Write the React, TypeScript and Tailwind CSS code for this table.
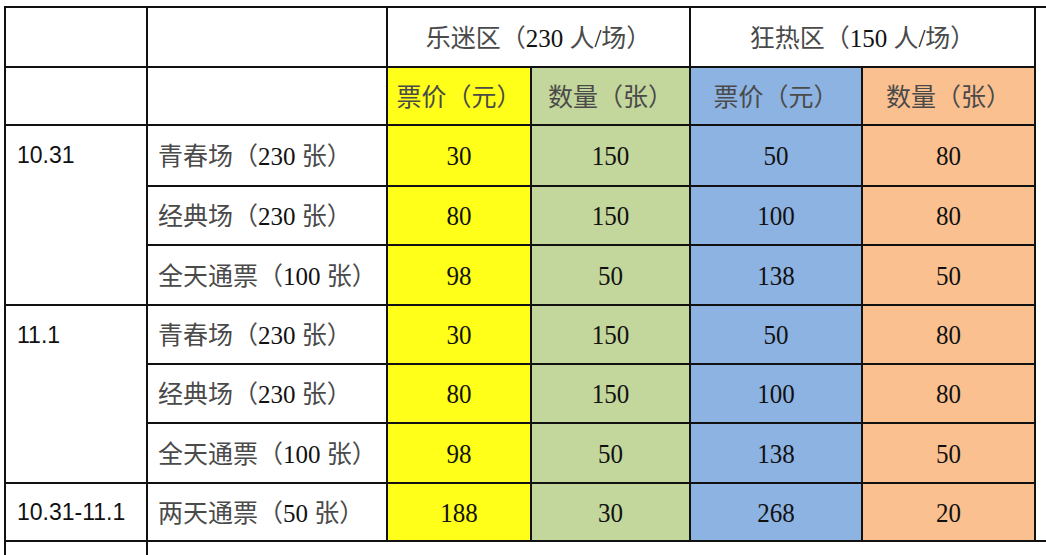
import React from "react";

const serif = "font-['Liberation_Serif','Noto_Sans_CJK_SC',serif]";

function Mixed({ text }: { text: string }) {
  const parts = text.split(/([\x00-\x7F]+)/).filter((p) => p.length > 0);
  return (
    <span className="whitespace-pre">
      {parts.map((p, i) =>
        /^[\x00-\x7F]+$/.test(p) ? (
          <span key={i} className="text-[#111] font-['Liberation_Serif',serif]">
            {p}
          </span>
        ) : (
          <span key={i} className="text-[#4a4a4a] font-['Noto_Sans_CJK_SC',sans-serif]">
            {p}
          </span>
        )
      )}
    </span>
  );
}

const cell = "border-r-2 border-b-2 border-[#111] flex items-center";

const colors = ["bg-[#ffff19]", "bg-[#c3d69b]", "bg-[#8db3e2]", "bg-[#fac08f]"];

type Row = { name: string; vals: string[] };

const group1: Row[] = [
  { name: "青春场（230 张）", vals: ["30", "150", "50", "80"] },
  { name: "经典场（230 张）", vals: ["80", "150", "100", "80"] },
  { name: "全天通票（100 张）", vals: ["98", "50", "138", "50"] },
];

function Num({ v }: { v: string }) {
  return <span className="inline-block scale-y-[1.08] text-[#111] font-['Liberation_Serif',serif]">{v}</span>;
}

function DataRow({ r }: { r: Row }) {
  return (
    <>
      <div className={`${cell} pl-[10px]`}>
        <Mixed text={r.name} />
      </div>
      {r.vals.map((v, i) => (
        <div key={i} className={`${cell} ${colors[i]} justify-center`}>
          <Num v={v} />
        </div>
      ))}
      <div />
    </>
  );
}

function DateCell({ label, first }: { label: string; first: number }) {
  return (
    <div className="row-span-3 border-r-2 border-b-2 border-[#111] flex flex-col">
      <div
        className="flex items-center pl-[11px] font-['Liberation_Sans',sans-serif] text-[23px] text-[#111]"
        style={{ height: first }}
      >
        {label}
      </div>
    </div>
  );
}

export default function App() {
  return (
    <div className="w-[1046px] h-[555px] overflow-hidden bg-white pt-[6px] pl-[4px]">
      <div
        className={`grid w-[1092px] border-l-2 border-t-2 border-[#111] text-[25px] leading-none ${serif} grid-cols-[142px_240px_144px_159px_172px_173px_60px] grid-rows-[60px_58px_61px_59px_60px_59px_59px_60px_58px_40px]`}
      >
        {/* header row 1 */}
        <div className={cell} />
        <div className={cell} />
        <div className={`${cell} col-span-2 justify-center`}>
          <Mixed text="乐迷区（230 人/场）" />
        </div>
        <div className={`${cell} col-span-2 justify-center`}>
          <Mixed text="狂热区（150 人/场）" />
        </div>
        <div />

        {/* header row 2 */}
        <div className={cell} />
        <div className={cell} />
        <div className={`${cell} ${colors[0]} justify-center`}>
          <Mixed text="票价（元）" />
        </div>
        <div className={`${cell} ${colors[1]} justify-center`}>
          <Mixed text="数量（张）" />
        </div>
        <div className={`${cell} ${colors[2]} justify-center`}>
          <Mixed text="票价（元）" />
        </div>
        <div className={`${cell} ${colors[3]} justify-center`}>
          <Mixed text="数量（张）" />
        </div>
        <div />

        {/* group 10.31 */}
        <DateCell label="10.31" first={59} />
        {group1.map((r, i) => (
          <DataRow key={"a" + i} r={r} />
        ))}

        {/* group 11.1 */}
        <DateCell label="11.1" first={58} />
        {group1.map((r, i) => (
          <DataRow key={"b" + i} r={r} />
        ))}

        {/* two-day row */}
        <div className={`${cell} pl-[11px] font-['Liberation_Sans',sans-serif] text-[23px] text-[#111]`}>
          10.31-11.1
        </div>
        <div className={`${cell} pl-[10px]`}>
          <Mixed text="两天通票（50 张）" />
        </div>
        {["188", "30", "268", "20"].map((v, i) => (
          <div key={i} className={`${cell} ${colors[i]} justify-center`}>
            <Num v={v} />
          </div>
        ))}
        <div className="border-b-2 border-[#111]" />

        {/* partial last row */}
        <div className="border-r-2 border-[#111]" />
        <div className="col-span-6" />
      </div>
    </div>
  );
}
